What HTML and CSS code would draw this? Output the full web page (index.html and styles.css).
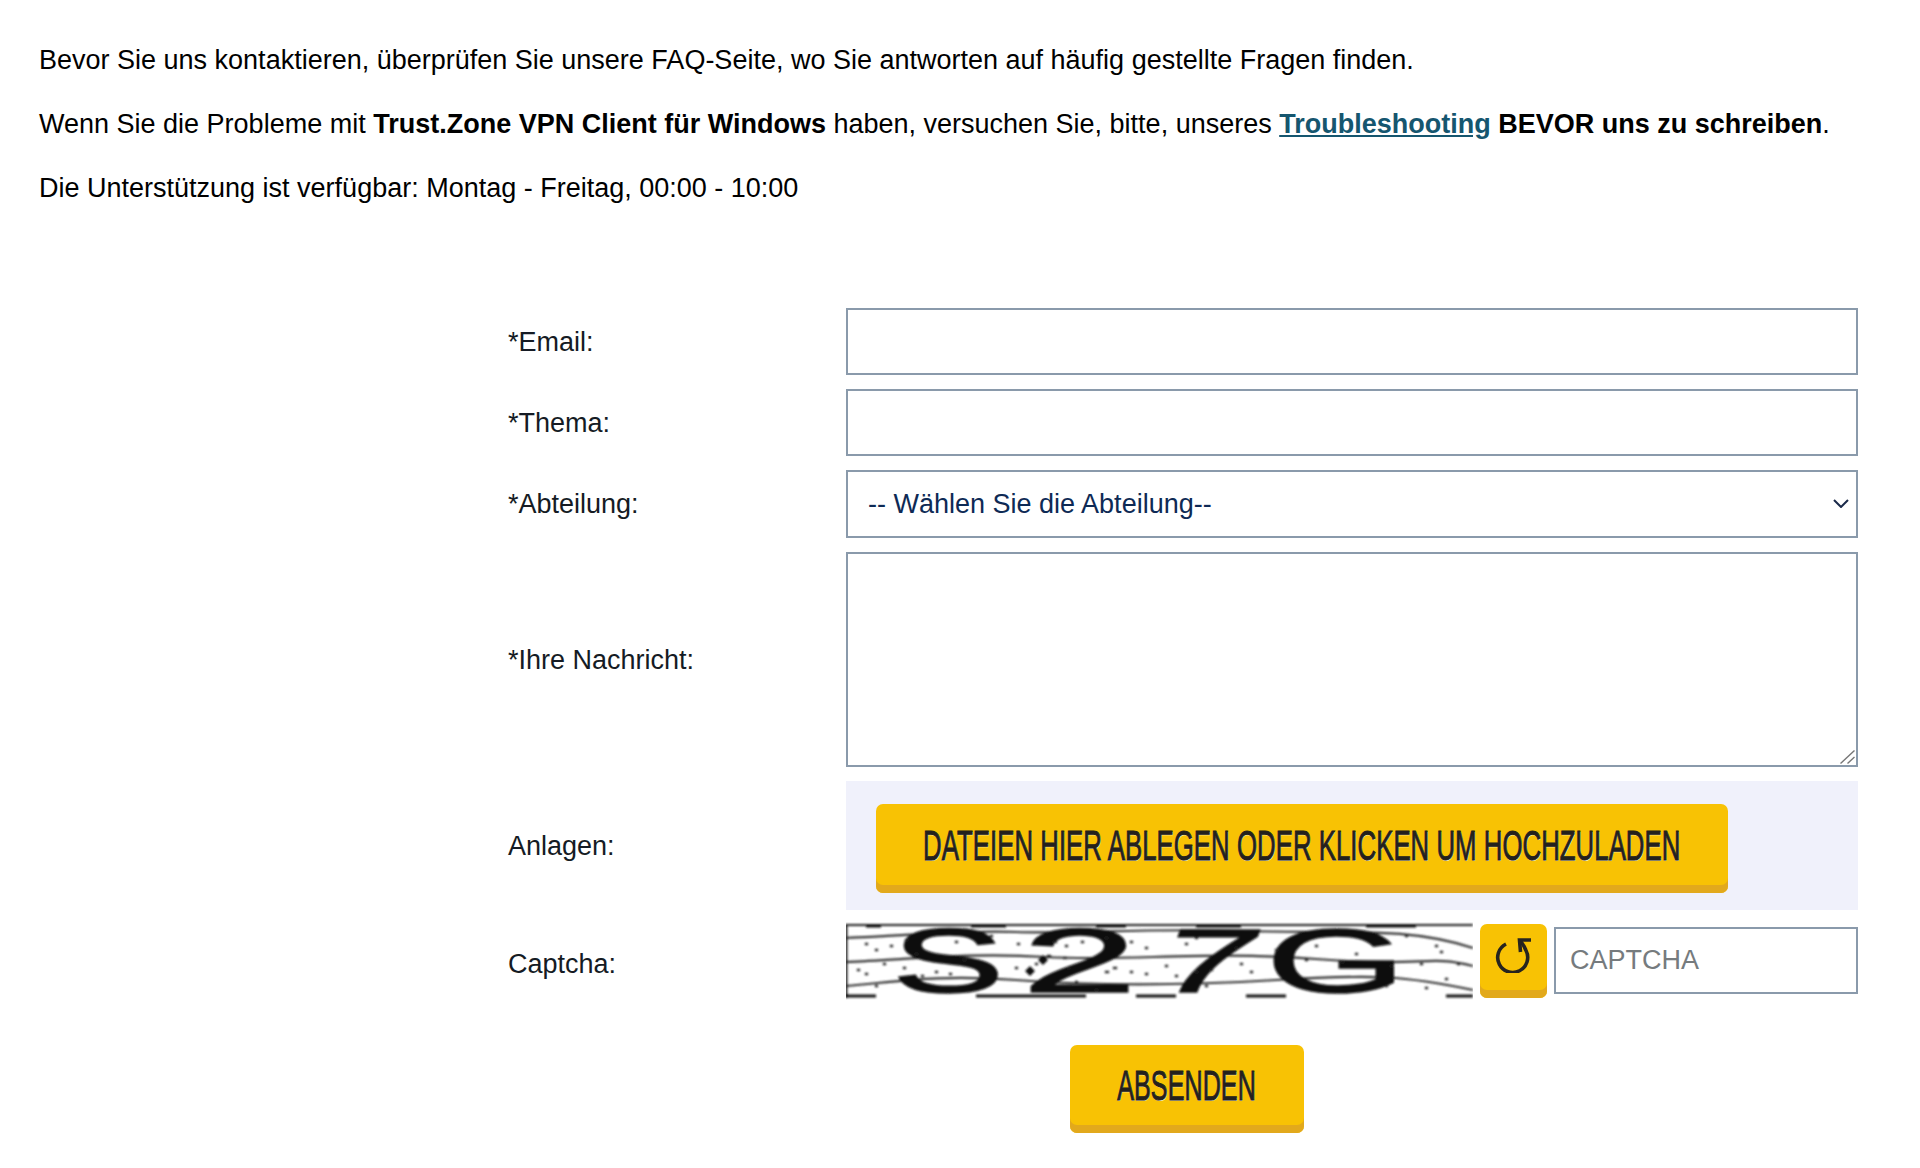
FILE: index.html
```html
<!DOCTYPE html>
<html lang="de">
<head>
<meta charset="utf-8">
<title>Kontakt</title>
<link rel="stylesheet" href="styles.css">
</head>
<body>
<main class="page">
  <section class="intro">
    <p>Bevor Sie uns kontaktieren, überprüfen Sie unsere FAQ-Seite, wo Sie antworten auf häufig gestellte Fragen finden.</p>
    <p>Wenn Sie die Probleme mit <strong>Trust.Zone VPN Client für Windows</strong> haben, versuchen Sie, bitte, unseres <a class="link" href="#">Troubleshooting</a> <strong>BEVOR uns zu schreiben</strong>.</p>
    <p>Die Unterstützung ist verfügbar: Montag - Freitag, 00:00 - 10:00</p>
  </section>
  <form class="form">
    <div class="fields">
      <label class="label">*Email:</label>
      <input class="control" type="text">
      <label class="label">*Thema:</label>
      <input class="control" type="text">
      <label class="label">*Abteilung:</label>
      <div class="select-wrap">
        <select class="control select"><option>-- Wählen Sie die Abteilung--</option></select>
        <svg class="chevron" viewBox="0 0 16 9" width="16" height="9"><path d="M1 1l7 7 7-7" fill="none" stroke="#1b2a4a" stroke-width="2"/></svg>
      </div>
      <label class="label">*Ihre Nachricht:</label>
      <div class="area-wrap">
        <textarea class="control area"></textarea>
        <svg class="grip" viewBox="0 0 15 14" width="15" height="14"><path d="M0.500 13.500L14.500 0.500M7.500 13.500L14.500 7" fill="none" stroke="#777" stroke-width="1.400"/></svg>
      </div>
      <label class="label">Anlagen:</label>
      <div class="drop"><button class="btn btn-drop" type="button"><span class="squeeze squeeze-drop">DATEIEN HIER ABLEGEN ODER KLICKEN UM HOCHZULADEN</span></button></div>
      <label class="label">Captcha:</label>
      <div class="captcha-row">
        <svg class="captcha" viewBox="0 0 627 74" width="627" height="74" role="img" aria-label="Captcha">
          <defs><filter id="soft" x="0" y="0" width="100%" height="100%"><feGaussianBlur stdDeviation="0.8"/></filter></defs>
          <rect width="627" height="74" fill="#fff"/>
          <g filter="url(#soft)">
            <g fill="none" stroke="#333" stroke-width="2.200">
              <path d="M0 14C60 12 110 6 170 8S300 4 400 7 560 2 627 24"/>
              <path d="M0 38C60 36 120 28 200 33S360 26 470 35 580 30 627 42"/>
              <path d="M0 62C50 58 90 50 170 56S330 62 430 56 560 52 627 66"/>
              <path d="M0 1H627" stroke="#222"/>
              <path d="M0 0V74" stroke="#222" stroke-width="3"/>
            </g>
            <path d="M20 2H35M125 2H160M250 2H280M350 2H395M520 2H570M0 72H30M130 72H240M290 72H330M400 72H440M600 72H627" stroke="#111" stroke-width="3" fill="none"/>
            <text class="cg" transform="translate(46 68) scale(1.87 1)">S</text>
            <text class="cg" transform="translate(176 68) scale(2.3 1)">2</text>
            <text class="cg" transform="translate(304 68) skewX(-20) scale(1.9 1)">7</text>
            <text class="cg" transform="translate(420 68) scale(2 1)">G</text>
            <path d="M178 36l5-5 5 5-5 5zM165 47l5-5 5 5-5 5z" fill="#111" transform="translate(14 0)"/>
            <path d="M430 26h1M470 22h1M510 30h1M545 42h1M560 12h1M590 22h1M595 28h1M600 55h1M580 64h1M20 20h1M30 26h1M45 22h1M60 16h1M70 30h1M12 46h1M38 40h1M58 44h1M30 62h1M20 50h1M110 18h1M145 12h1M172 20h1M208 18h2M220 22h1M236 18h1M170 44h1M190 40h1M202 32h2M218 34h2M222 44h1M260 48h2M268 44h2M285 48h1M300 50h1M320 42h1M330 52h1M350 48h1M365 46h1M340 20h1M350 14h1M390 24h1M405 48h1M260 14h1M285 18h1M300 24h1M118 36h1M104 50h1M90 48h1M76 52h1M360 62h1M230 58h1M250 66h1M395 40h1M460 36h1M496 38h1M540 62h1M575 40h1M612 40h1" stroke="#222" stroke-width="2.600" stroke-linecap="round" fill="none"/>
          </g>
        </svg>
        <button class="btn btn-refresh" type="button" aria-label="Neu laden">
          <svg class="refresh-icon" viewBox="0 0 38 36" width="38" height="36"><path d="M11 7A15 15 0 1 0 31 13.500C30 11 28.500 8 25.500 4" fill="none" stroke="#26241f" stroke-width="3.600"/><path d="M36 3H24.500L25.500 15" fill="none" stroke="#26241f" stroke-width="3.600"/></svg>
        </button>
        <input class="control captcha-input" type="text" placeholder="CAPTCHA">
      </div>
    </div>
    <div class="actions"><button class="btn btn-send" type="submit"><span class="squeeze squeeze-send">ABSENDEN</span></button></div>
  </form>
</main>
</body>
</html>
```
FILE: styles.css
```css
* { box-sizing: border-box; }
html, body { margin: 0; background: #fff; }
body { font-family: "Liberation Sans", Arial, sans-serif; font-size: 27px; line-height: 32px; color: #000; height: 1168px; overflow: hidden; }
.page { padding: 44px 0 0 39px; }
.intro p { margin: 0 0 32px; }
.link { color: #15566f; font-weight: 700; text-decoration: underline; }
.form { margin: 104px 0 0 469px; width: 1350px; }
.fields { display: grid; grid-template-columns: 338px 1012px; grid-template-rows: 67px 67px 68px 215px 129px auto; row-gap: 14px; align-items: center; }
.label { color: #151b24; }
.control { width: 100%; height: 100%; border: 2px solid #8a9aab; background: #fff; border-radius: 0; font: 27px "Liberation Sans", Arial, sans-serif; color: #0e2a55; padding: 0 16px; outline: none; display: block; }
.select-wrap, .area-wrap { position: relative; height: 100%; }
.select { appearance: none; -webkit-appearance: none; padding-left: 20px; }
.chevron { position: absolute; right: 9px; top: 29px; }
.area { resize: none; padding: 12px 16px; }
.grip { position: absolute; right: 3px; bottom: 3px; }
.drop { background: #f0f1fb; height: 100%; padding: 23px 130px 17px 30px; }
.btn { border: 0; background: #f8c204; border-radius: 7px; box-shadow: inset 0 -8px 0 #e2a91c; color: #24211c; font-family: "Liberation Sans", Arial, sans-serif; font-weight: 400; cursor: pointer; padding: 0 0 8px; overflow: hidden; }
.squeeze { display: inline-block; font-size: 42px; line-height: 50px; white-space: nowrap; margin-top: 2px; -webkit-text-stroke: 1px #24211c; text-shadow: 1px 1px 0 #fff6c8; }
.squeeze-drop { transform: scaleX(0.615); }
.squeeze-send { transform: scaleX(0.6); }
.btn-drop { display: flex; align-items: center; justify-content: center; width: 100%; height: 89px; }
.captcha-row { display: flex; align-items: flex-start; padding-bottom: 6px; }
.captcha { display: block; flex: none; overflow: visible; }
.btn-refresh { flex: none; width: 67px; height: 74px; margin-left: 7px; display: flex; align-items: center; justify-content: center; }
.refresh-icon { margin-bottom: 5px; }
.captcha-input { flex: 1; height: 67px; margin: 3px 0 0 7px; padding: 0 14px; }
.captcha-input::placeholder { color: #767b7e; opacity: 1; }
.actions { display: flex; justify-content: center; padding: 41px 0 0 7px; }
.btn-send { display: flex; align-items: center; justify-content: center; width: 234px; height: 88px; }
.cg { font-family: "Liberation Sans", sans-serif; font-weight: 400; font-size: 90px; fill: #0a0a0a; stroke: #0a0a0a; stroke-width: 1.500; }
```
